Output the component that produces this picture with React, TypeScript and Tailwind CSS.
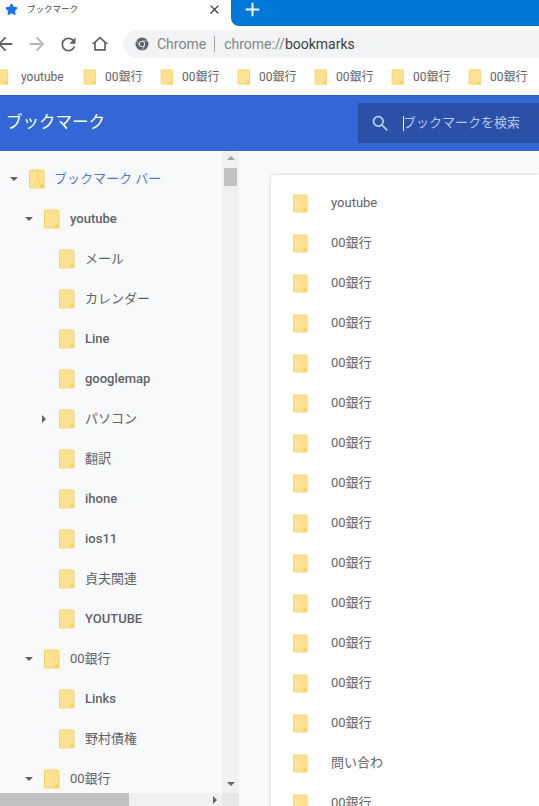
import React from 'react';
import { Star } from 'lucide-react';

const FONT = "font-['Roboto','Noto_Sans_CJK_JP',sans-serif]";

const treeRows = [
  { depth: 0, open: true, label: 'ブックマーク バー', selected: true },
  { depth: 1, open: true, label: 'youtube' },
  { depth: 2, label: 'メール' },
  { depth: 2, label: 'カレンダー' },
  { depth: 2, label: 'Line' },
  { depth: 2, label: 'googlemap' },
  { depth: 2, closed: true, label: 'パソコン' },
  { depth: 2, label: '翻訳' },
  { depth: 2, label: 'ihone' },
  { depth: 2, label: 'ios11' },
  { depth: 2, label: '貞夫関連' },
  { depth: 2, label: 'YOUTUBE' },
  { depth: 1, open: true, label: '00銀行' },
  { depth: 2, label: 'Links' },
  { depth: 2, label: '野村債権' },
  { depth: 1, open: true, label: '00銀行' },
];

const listRows = [
  'youtube', '00銀行', '00銀行', '00銀行', '00銀行', '00銀行', '00銀行', '00銀行',
  '00銀行', '00銀行', '00銀行', '00銀行', '00銀行', '00銀行', '問い合わ', '00銀行',
];

const barItems = ['00銀行', '00銀行', '00銀行', '00銀行', '00銀行', '00銀行'];

const ICONS = {
  back: 'M20 11H7.83l5.59-5.59L12 4l-8 8 8 8 1.41-1.41L7.83 13H20v-2z',
  forward: 'M4 11h12.17l-5.59-5.59L12 4l8 8-8 8-1.41-1.41L16.17 13H4v-2z',
  reload: 'M17.65 6.35C16.2 4.9 14.21 4 12 4c-4.42 0-7.99 3.58-7.99 8s3.57 8 7.99 8c3.73 0 6.84-2.55 7.73-6h-2.08c-.82 2.33-3.04 4-5.65 4-3.31 0-6-2.69-6-6s2.69-6 6-6c1.66 0 3.14.69 4.22 1.78L13 11h7V4l-2.35 2.35z',
  home: 'M12 5.69l5 4.5V18H7v-7.81l5-4.5M12 3L2 12h3v8h14v-8h3L12 3z',
  search: 'M15.5 14h-.79l-.28-.27C15.41 12.59 16 11.11 16 9.5 16 5.91 13.09 3 9.5 3S3 5.91 3 9.5 5.91 16 9.5 16c1.61 0 3.09-.59 4.23-1.57l.27.28v.79l5 4.99L20.49 19l-4.99-5zm-6 0C7.01 14 5 11.99 5 9.5S7.01 5 9.5 5 14 7.01 14 9.5 11.99 14 9.5 14z',
  close: 'M19 6.41L17.59 5 12 10.59 6.41 5 5 6.41 10.59 12 5 17.59 6.41 19 12 13.41 17.59 19 19 17.59 13.41 12 19 6.41z',
  plus: 'M19 13h-6v6h-2v-6H5v-2h6V5h2v6h6v2z',
};

const Icon: React.FC<{ d: string; size: number; className?: string }> = ({ d, size, className }) => (
  <svg width={size} height={size} viewBox="0 0 24 24" fill="currentColor" className={`shrink-0 ${className ?? ''}`}>
    <path d={d} />
  </svg>
);

const Folder: React.FC<{ w?: number; h?: number; open?: boolean }> = ({ w = 16, h = 20, open }) => (
  <svg width={w} height={h} viewBox="0 0 16 20" className="shrink-0">
    <path d="M1.5 1h12a1.5 1.5 0 0 1 1.5 1.5V19H1.5A1 1 0 0 1 .5 18V2a1 1 0 0 1 1-1z" fill="#fde293" stroke="#fad165" />
    <path d="M11 19v-2.5a1.5 1.5 0 0 1 1.5-1.5H15v4z" fill="#fad165" />
    {open && <path d="M7 1l2 3v8l4 4" fill="none" stroke="#fad165" strokeWidth="1.2" />}
  </svg>
);

const ChromeIcon = () => (
  <svg width="14" height="14" viewBox="0 0 14 14" className="shrink-0">
    <circle cx="7" cy="7" r="6.5" fill="#5f6368" />
    <circle cx="7" cy="7" r="3" fill="#f1f3f4" />
    <circle cx="7" cy="7" r="2.2" fill="#5f6368" />
    <path d="M7 4h6M4.4 8.5L1.5 3.5M9.6 8.5L6.8 13.4" stroke="#f1f3f4" strokeWidth="0.7" />
  </svg>
);

const Caret: React.FC<{ dir: 'down' | 'right' | 'up' }> = ({ dir }) => {
  if (dir === 'right') return <div className="w-0 h-0 border-y-[4px] border-y-transparent border-l-[4px] border-l-[#5f6368]" />;
  if (dir === 'up') return <div className="w-0 h-0 border-x-[4px] border-x-transparent border-b-[4px] border-b-[#a3a3a3]" />;
  return <div className="w-0 h-0 border-x-[4px] border-x-transparent border-t-[4px] border-t-[#5f6368]" />;
};

const TreeRow: React.FC<(typeof treeRows)[number] & { closed?: boolean; open?: boolean; selected?: boolean }> = ({ depth, open, closed, label, selected }) => {
  const latin = /^[\x00-\x7f]+$/.test(label);
  return (
    <div className="flex items-center h-10" style={{ paddingLeft: depth * 15 + 8 }}>
      <div className="w-[11px] flex justify-center">
        {open && <Caret dir="down" />}
        {closed && <Caret dir="right" />}
      </div>
      <div className="ml-[10px]">
        <Folder open={selected} />
      </div>
      <span className={`whitespace-nowrap text-[13px] ${selected ? 'ml-[9px] text-[#4f7ad8]' : latin ? 'ml-[10px] text-[#5f6368] font-medium' : 'ml-[10px] text-[#5f6368]'}`}>{label}</span>
    </div>
  );
};

export default function App() {
  return (
    <div className={`${FONT} w-[539px] h-[806px] overflow-hidden flex flex-col bg-white`}>
      {/* Tab strip */}
      <div className="h-[26px] flex shrink-0">
        <div className="w-[231px] flex items-center pl-[5px] pr-[9px] pb-[7px]">
          <Star size={13} className="text-[#1a73e8] fill-[#1a73e8]" />
          <span className="ml-[9px] text-[8.5px] text-[#3c4043]">ブックマーク</span>
          <Icon d={ICONS.close} size={15} className="ml-auto text-[#3c4043]" />
        </div>
        <div className="flex-1 bg-[#0078d7] rounded-bl-[8px] flex items-center pl-[10px] pb-[7px]">
          <Icon d={ICONS.plus} size={23} className="text-white" />
        </div>
      </div>

      {/* Toolbar */}
      <div className="h-[34px] pt-[2px] flex items-center shrink-0">
        <div className="flex items-center w-[123px]">
          <Icon d={ICONS.back} size={22} className="text-[#5f6368] -ml-[6px]" />
          <Icon d={ICONS.forward} size={22} className="text-[#b5b7ba] ml-[10px]" />
          <Icon d={ICONS.reload} size={21} className="text-[#5f6368] ml-[10px]" />
          <Icon d={ICONS.home} size={20} className="text-[#5f6368] ml-[11px]" />
        </div>
        <div className="flex-1 h-[28px] bg-[#f1f3f4] rounded-l-[14px] flex items-center pl-[12px] text-[14px] whitespace-nowrap">
          <ChromeIcon />
          <span className="ml-[8px] text-[#80868b]">Chrome</span>
          <span className="w-px h-[16px] bg-[#a0a4a8] ml-[8px]" />
          <span className="ml-[9px] text-[#80868b]">chrome://</span>
          <span className="text-[#3c4043]">bookmarks</span>
        </div>
      </div>

      {/* Bookmarks bar */}
      <div className="h-[35px] pb-px flex items-center shrink-0 -ml-[5px] text-[12px] text-[#5f6368] whitespace-nowrap">
        <div className="w-[88px] shrink-0 flex items-center">
          <Folder w={14} h={16} />
          <span className="ml-[12px]">youtube</span>
        </div>
        {barItems.map((b, i) => (
          <div key={i} className="w-[77px] shrink-0 flex items-center">
            <Folder w={14} h={16} />
            <span className="ml-[8px]">{b}</span>
          </div>
        ))}
      </div>

      {/* Page header */}
      <div className="h-[56px] shrink-0 bg-[#3367d6] border-t border-[#2f5cbd] pb-px flex items-center justify-between pl-[6px]">
        <h1 className="text-[16.5px] text-white font-normal">ブックマーク</h1>
        <div className="w-[181px] h-10 bg-[#2a50a8] flex items-center pl-[12px]">
          <Icon d={ICONS.search} size={21} className="text-[#b8c9ee]" />
          <span className="ml-[12px] w-px h-[15px] bg-white" />
          <span className="text-[13px] text-[#b8c9ee] -ml-px whitespace-nowrap">ブックマークを検索</span>
        </div>
      </div>

      <div className="flex-1 min-h-0 flex">
        {/* Folder tree */}
        <div className="w-[239px] shrink-0 flex flex-col">
          <div className="flex-1 min-h-0 flex">
            <div className="w-[222px] bg-[#f8f9fa] pt-[8px] overflow-hidden">
              {treeRows.map((r, i) => (
                <TreeRow key={i} {...r} />
              ))}
            </div>
            <div className="w-[17px] bg-[#f1f1f1] flex flex-col items-center pt-[5px] pb-[7px]">
              <Caret dir="up" />
              <div className="w-[13px] h-[18px] bg-[#c1c1c1] mt-[8px]" />
              <div className="mt-auto">
                <Caret dir="down" />
              </div>
            </div>
          </div>
          <div className="h-[13px] shrink-0 flex bg-[#f1f1f1]">
            <div className="w-[129px] bg-[#c1c1c1]" />
            <div className="w-[93px] flex items-center justify-end pr-[5px]">
              <Caret dir="right" />
            </div>
            <div className="w-[17px] bg-[#e8e8e8]" />
          </div>
        </div>

        {/* Folder contents */}
        <div className="flex-1 min-w-0 bg-[#f8f9fa] pt-[24px] pl-[32px]">
          <div className="bg-white rounded-tl-[4px] shadow-[0_0_3px_rgba(60,64,67,0.3)] pt-[8px] pl-[22px] h-[700px]">
            {listRows.map((t, i) => (
              <div key={i} className="h-10 flex items-center">
                <Folder w={15} h={19} />
                <span className="ml-[23px] text-[13px] text-[#5f6368] whitespace-nowrap">{t}</span>
              </div>
            ))}
          </div>
        </div>
      </div>
    </div>
  );
}
